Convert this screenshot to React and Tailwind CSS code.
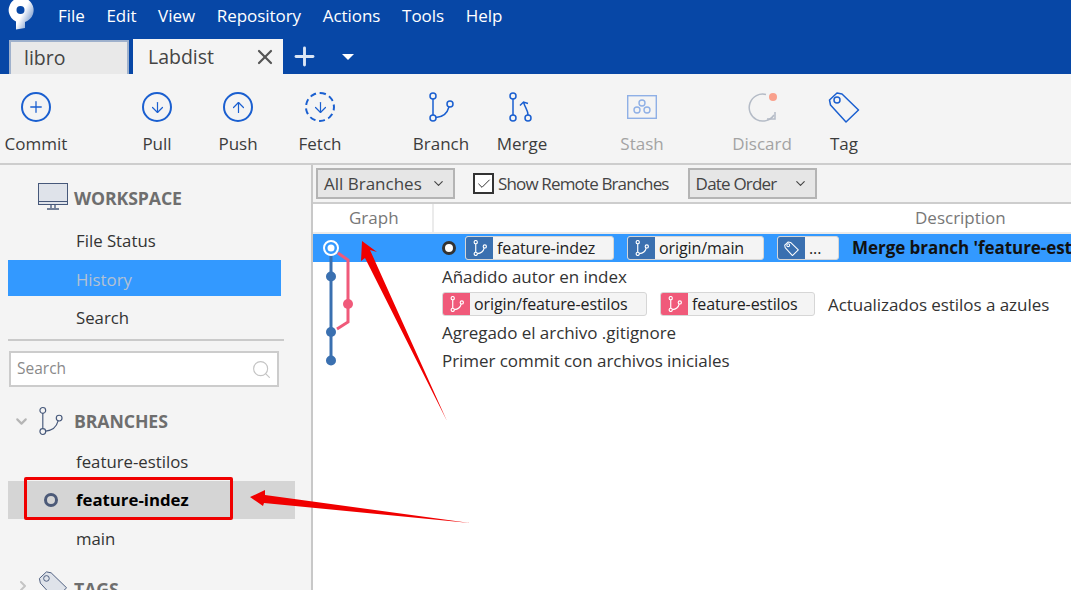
import { Plus, ArrowDown, ArrowUp, X, ChevronDown, ChevronRight, Search, Check } from 'lucide-react'

const BranchIcon = ({ className = '', sw = 1.500 }) => (
  <svg viewBox="0 0 26 30" className={className} fill="none" stroke="currentColor" strokeWidth={sw}>
    <circle cx="5" cy="4" r="3" />
    <circle cx="5" cy="26" r="3" />
    <circle cx="22" cy="12" r="3" />
    <path d="M5 7v16M8 25.500c8-.5 11.500-5 13-10.800" />
  </svg>
)

const MergeIcon = ({ className = '' }) => (
  <svg viewBox="0 0 26 30" className={className} fill="none" stroke="currentColor" strokeWidth="1.500">
    <circle cx="4" cy="4" r="3" />
    <circle cx="4" cy="26" r="3" />
    <circle cx="19" cy="26" r="3" />
    <path d="M4 7v16M19 23c0-5-3-7-4.500-13M11 13.500l3.500-3.500 4.500 1.500" />
  </svg>
)

const TagIcon = ({ className = '', sw = 1.500, fill = 'none' }) => (
  <svg viewBox="0 0 32 32" className={className} fill={fill} stroke="currentColor" strokeWidth={sw} strokeLinejoin="round">
    <path d="M1.500 9 L9 2 L14 3 L30.500 19 L18 31 L2.500 14 Z" />
    <circle cx="9" cy="9" r="3" />
  </svg>
)

const ToolButton = ({ label, icon, muted, className = '' }) => (
  <div className={`flex w-[72px] shrink-0 flex-col items-center ${className}`}>
    <div className="flex h-[32px] w-[34px] items-center justify-center">{icon}</div>
    <span className={`mt-[10px] text-[17px] leading-[22px] ${muted ? 'text-[#a3a3a3]' : 'text-[#3c3c3c]'}`}>{label}</span>
  </div>
)

const Ref = ({ name, width, pink, tag, className = '' }) => (
  <div className={`flex h-[24px] shrink-0 items-stretch overflow-hidden rounded-[3px] border border-[#d6d6d6] bg-[#f4f4f4] ${className}`} style={{ width }}>
    <div className={`flex w-[27px] shrink-0 items-center justify-center text-white ${pink ? 'bg-[#f05a7a]' : 'bg-[#3a70b0]'}`}>
      {tag ? <TagIcon className="h-[15px] w-[15px]" sw={2.200} /> : <BranchIcon className="h-[16px] w-[14px]" sw={2.200} />}
    </div>
    <span className="pl-[4px] text-[16px] leading-[23px] tracking-[-0.100px] text-[#222]">{name}</span>
  </div>
)

const Sidebar = () => (
  <aside className="relative w-[313px] shrink-0 overflow-hidden border-r-2 border-[#c8c8c8] bg-[#f4f4f4] pl-[8px]">
    <div className="box-content flex h-[34px] items-center pl-[30px] pt-[17px]">
      <svg viewBox="0 0 30 27" className="mb-[5px] h-[27px] w-[30px]" fill="none">
        <rect x="0.500" y="0.500" width="29" height="21" fill="#dfe3ea" stroke="#46587a" />
        <path d="M0 18.500h30" stroke="#46587a" />
        <path d="M13 22v3M17 22v3M9 26h12" stroke="#46587a" strokeWidth="1.300" />
      </svg>
      <span className="mb-[2px] ml-[6px] text-[17.700px] font-bold tracking-[-0.100px] text-[#6e6e6e]">WORKSPACE</span>
    </div>
    <div className="mt-[8px] h-[36px] pl-[68px] text-[16.800px] leading-[34px] text-[#333]">File Status</div>
    <div className="h-[36px] w-[273px] bg-[#3399ff] pl-[68px] text-[16.800px] leading-[40px] text-[#b4c2d2]">History</div>
    <div className="h-[38px] pl-[68px] text-[16.800px] leading-[44px] text-[#333]">Search</div>
    <div className="mt-[5px] h-[2px] w-[276px] bg-[#cacaca]" />
    <div className="ml-[1px] mt-[10px] flex h-[36px] w-[270px] items-center justify-between border-2 border-[#cccccc] bg-white pl-[6px] pr-[5px]">
      <span className="text-[15.500px] text-[#8a8a8a]">Search</span>
      <Search className="h-[21px] w-[21px] text-[#c4c4c4]" strokeWidth={1.300} />
    </div>
    <div className="mt-[18px] flex h-[32px] items-center pl-[5px]">
      <ChevronDown className="h-[17px] w-[17px] text-[#b5b5b5]" strokeWidth={3} />
      <BranchIcon className="ml-[8px] h-[30px] w-[25px] text-[#46587a]" sw={1.200} />
      <span className="ml-[11px] text-[17.700px] font-bold tracking-[-0.100px] text-[#6e6e6e]">BRANCHES</span>
    </div>
    <div className="mt-[11px] h-[33px] pl-[68px] text-[16.800px] leading-[28px] text-[#333]">feature-estilos</div>
    <div className="flex h-[38px] w-[287px] items-center bg-[#d5d5d5]">
      <span className="ml-[36px] h-[14px] w-[14px] rounded-full border-[3px] border-[#4c5a78]" />
      <span className="ml-[18px] text-[16.800px] font-bold text-black">feature-indez</span>
    </div>
    <div className="h-[40px] pl-[68px] text-[16.800px] leading-[40px] text-[#333]">main</div>
    <div className="mt-[11px] flex h-[32px] items-start pl-[7px]">
      <ChevronRight className="mt-[8px] h-[16px] w-[16px] text-[#c4c4c4]" strokeWidth={3} />
      <TagIcon className="ml-[7px] h-[30px] w-[30px] text-[#46587a]" sw={1} fill="#dfe3ea" />
      <span className="ml-[6px] mt-[6px] text-[17.700px] font-bold tracking-[-0.100px] text-[#6e6e6e]">TAGS</span>
    </div>
  </aside>
)

const Dropdown = ({ label, width, className = '', textClass = '' }) => (
  <div className={`flex h-[31px] items-center justify-between border-2 border-[#b4b4b4] bg-[#e6e6e6] pl-[6px] pr-[7px] ${className}`} style={{ width }}>
    <span className={`text-[17px] text-[#444] ${textClass}`}>{label}</span>
    <ChevronDown className="h-[15px] w-[15px] text-[#444]" strokeWidth={1.800} />
  </div>
)

const Graph = () => (
  <svg viewBox="0 0 60 140" className="absolute left-0 top-0 h-[140px] w-[60px]" fill="none">
    <path d="M18 22V127" stroke="#3a70b0" strokeWidth="3" />
    <path d="M25 19l10 7v62l-11 7" stroke="#f05a7a" strokeWidth="3" />
    <circle cx="18" cy="14" r="7" fill="#3399ff" stroke="white" strokeWidth="2" />
    <circle cx="18" cy="14" r="3.500" fill="white" />
    <circle cx="18" cy="42.500" r="5" fill="#3a70b0" />
    <circle cx="35" cy="70" r="5" fill="#f05a7a" />
    <circle cx="18" cy="98" r="5" fill="#3a70b0" />
    <circle cx="18" cy="126.500" r="5" fill="#3a70b0" />
  </svg>
)

const CommitRow = ({ children, className = '' }) => (
  <div className={`flex h-[28px] shrink-0 items-center pl-[129px] text-[17px] tracking-[-0.050px] text-[#333] ${className}`}>{children}</div>
)

const Main = () => (
  <main className="flex min-w-0 flex-1 flex-col bg-white">
    <div className="flex h-[39px] shrink-0 items-center border-b-2 border-[#cdcdcd] bg-[#f4f4f4] pl-[3px]">
      <Dropdown label="All Branches" width={139} />
      <span className="ml-[18px] flex h-[21px] w-[21px] items-center justify-center border-2 border-[#333] bg-white">
        <Check className="h-[16px] w-[16px] text-[#333]" strokeWidth={1.500} />
      </span>
      <span className="ml-[4px] text-[17px] tracking-[-0.850px] text-[#444]">Show Remote Branches</span>
      <Dropdown label="Date Order" width={129} className="ml-[19px]" textClass="tracking-[-0.800px]" />
    </div>
    <div className="flex h-[30px] shrink-0 border-b-2 border-[#ebebeb] text-[17px] leading-[28px] text-[#777]">
      <div className="w-[121px] border-r-2 border-[#ebebeb] pl-[36px]">Graph</div>
      <div className="flex-1 pl-[481px]">Description</div>
    </div>
    <div className="relative flex-1">
      <CommitRow className="bg-[#3399ff]">
        <span className="h-[14px] w-[14px] shrink-0 rounded-full border-[3px] border-[#333] bg-white" />
        <Ref name="feature-indez" width={149} className="ml-[9px]" />
        <Ref name="origin/main" width={137} className="ml-[13px]" />
        <Ref name="..." width={62} tag className="ml-[13px]" />
        <span className="ml-[13px] whitespace-nowrap font-bold text-[#111]">Merge branch 'feature-estilos'</span>
      </CommitRow>
      <CommitRow className="pt-[2px]">Añadido autor en index</CommitRow>
      <CommitRow>
        <Ref name="origin/feature-estilos" width={205} pink />
        <Ref name="feature-estilos" width={155} pink className="ml-[13px]" />
        <span className="ml-[13px] mt-[1px]">Actualizados estilos a azules</span>
      </CommitRow>
      <CommitRow className="pt-[2px]">Agregado el archivo .gitignore</CommitRow>
      <CommitRow className="pt-[2px]">Primer commit con archivos iniciales</CommitRow>
      <Graph />
    </div>
  </main>
)

const App = () => (
  <div className="relative flex h-[590px] w-[1071px] flex-col overflow-hidden bg-white font-['Open_Sans','Noto_Sans',sans-serif]">
    {/* Title + tabs */}
    <header className="h-[74px] shrink-0 bg-[#0747a6]">
      <div className="flex h-[40px] items-start">
        <svg viewBox="0 0 26 30" className="ml-[8px] h-[30px] w-[26px]">
          <defs>
            <linearGradient id="logo" x1="0.400" y1="0.200" x2="1" y2="0.600">
              <stop offset="0.400" stopColor="white" />
              <stop offset="1" stopColor="#7f9fd0" />
            </linearGradient>
          </defs>
          <path d="M8 29.500V21.500A12.500 12.500 0 1 1 17 22V28Z" fill="url(#logo)" />
          <circle cx="12.500" cy="10" r="4" fill="#0747a6" />
        </svg>
        <nav className="ml-[24px] flex gap-[21.700px] pt-[5px] text-[17px] leading-[22px] tracking-[-0.050px] text-white">
          <span>File</span><span>Edit</span><span>View</span><span>Repository</span><span>Actions</span><span>Tools</span><span>Help</span>
        </nav>
      </div>
      <div className="flex h-[34px] items-end pl-[9px]">
        <div className="flex h-[34px] w-[120px] items-center border-2 border-b-0 border-[#9fb1cc] bg-[#e9e9e9] pl-[13px] text-[19.500px] text-[#444]">libro</div>
        <div className="ml-[4px] flex h-[35px] w-[150px] items-center justify-between bg-[#f4f4f4] pl-[15px] pr-[6px] text-[19.500px] text-[#444]">
          Labdist
          <X className="h-[24px] w-[24px] text-[#555]" strokeWidth={2.200} />
        </div>
        <Plus className="ml-[7px] mb-[3px] h-[29px] w-[29px] text-[#dbe6f5]" strokeWidth={2.400} />
        <span className="mb-[14px] ml-[23px] h-0 w-0 border-x-[6px] border-t-[6px] border-x-transparent border-t-white" />
      </div>
    </header>

    {/* Toolbar */}
    <div className="flex h-[91px] shrink-0 border-b-2 border-[#cdcdcd] bg-[#f4f4f4] pt-[17px]">
      <ToolButton label="Commit" icon={<span className="flex h-[30px] w-[30px] items-center justify-center rounded-full border-2 border-[#1a5fd0]"><Plus className="h-[18px] w-[18px] text-[#1a5fd0]" strokeWidth={1.700} /></span>} />
      <ToolButton label="Pull" className="ml-[49px]" icon={<span className="flex h-[30px] w-[30px] items-center justify-center rounded-full border-2 border-[#1a5fd0]"><ArrowDown className="h-[17px] w-[17px] text-[#1a5fd0]" strokeWidth={1.700} /></span>} />
      <ToolButton label="Push" className="ml-[9px]" icon={<span className="flex h-[30px] w-[30px] items-center justify-center rounded-full border-2 border-[#1a5fd0]"><ArrowUp className="h-[17px] w-[17px] text-[#1a5fd0]" strokeWidth={1.700} /></span>} />
      <ToolButton label="Fetch" className="ml-[10px]" icon={<span className="flex h-[30px] w-[30px] items-center justify-center rounded-full border-2 border-dashed border-[#1a5fd0]"><ArrowDown className="h-[17px] w-[17px] text-[#1a5fd0]" strokeWidth={1.700} /></span>} />
      <ToolButton label="Branch" className="ml-[49px]" icon={<BranchIcon className="h-[30px] w-[26px] text-[#1a5fd0]" />} />
      <ToolButton label="Merge" className="ml-[9px]" icon={<MergeIcon className="h-[30px] w-[26px] text-[#1a5fd0]" />} />
      <ToolButton label="Stash" muted className="ml-[48px]" icon={
        <svg viewBox="0 0 30 24" className="h-[24px] w-[30px]" fill="none" stroke="#8fb0e6" strokeWidth="1.400">
          <rect x="0.700" y="0.700" width="28.600" height="22.600" />
          <circle cx="15" cy="8" r="3" /><circle cx="10" cy="15" r="3" /><circle cx="20" cy="15" r="3" />
        </svg>
      } />
      <ToolButton label="Discard" muted className="ml-[48px]" icon={
        <svg viewBox="0 0 32 32" className="h-[32px] w-[32px]" fill="none">
          <path d="M20 3.500A13.500 13.500 0 1 0 28 24" stroke="#b4bbc6" strokeWidth="1.500" />
          <path d="M21 28h8v-7" stroke="#b4bbc6" strokeWidth="1.500" />
          <circle cx="27" cy="6" r="4" fill="#f9a08c" />
        </svg>
      } />
      <ToolButton label="Tag" className="ml-[10px]" icon={<TagIcon className="h-[32px] w-[32px] text-[#1a5fd0]" />} />
    </div>

    <div className="flex min-h-0 flex-1">
      <Sidebar />
      <Main />
    </div>

    {/* Red annotations drawn on the screenshot */}
    <div className="absolute left-[24px] top-[477px] h-[43px] w-[209px] rounded-[2px] border-[3px] border-[#f00000]" />
    <svg viewBox="0 0 1071 590" className="pointer-events-none absolute left-0 top-0 h-[590px] w-[1071px]" fill="#f00000">
      <path d="M362 241L361 261L365 258L447 421L370 250L377 252Z" />
      <path d="M250 497L265 490L265 495L470 523L264 503L263 506Z" />
    </svg>
  </div>
)

export default App
